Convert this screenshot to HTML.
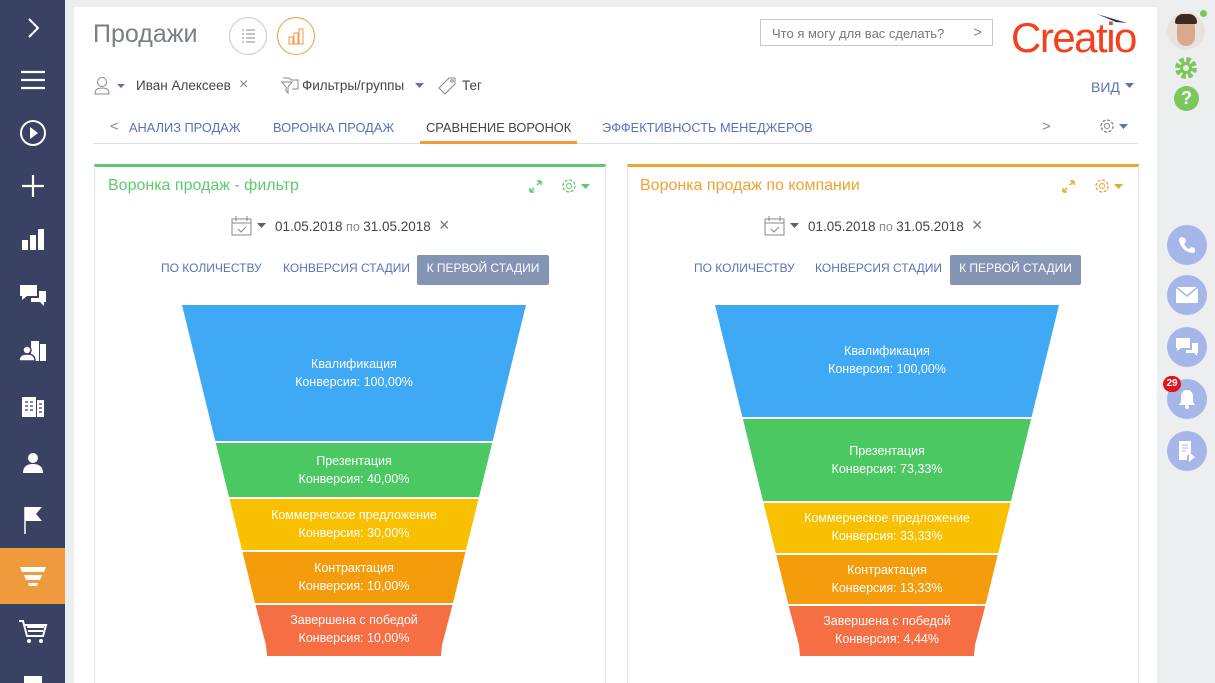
<!DOCTYPE html>
<html style="width:1215px;height:683px;overflow:hidden"><head><meta charset="utf-8"><style>
*{margin:0;padding:0;box-sizing:border-box}
body{width:1215px;height:683px;overflow:hidden;background:#eceef0;font-family:"Liberation Sans","Noto Sans CJK SC",sans-serif;position:relative}
.sb{position:absolute;left:0;top:0;width:65px;height:683px;background:#394263;overflow:hidden}
.sb .i{position:absolute;left:0;width:65px;height:56px;display:flex;align-items:center;justify-content:center}
.card{position:absolute;left:74px;top:7px;width:1083px;height:676px;background:#fff}
.a{position:absolute;white-space:nowrap}
.tab{font-size:12.8px;color:#5a73b8;position:absolute;top:120px}
.panel{position:absolute;top:164px;width:512px;height:519px;background:#fff;border:1px solid #e2e2e2;border-bottom:none}
.rc{position:absolute;left:1167px;width:40px;height:40px;border-radius:50%;background:#a7b6e8;display:flex;align-items:center;justify-content:center}
.btn{position:absolute;font-size:12px;color:#5a73b8}
</style></head><body>
<div class="sb">
 <div class="i" style="top:0"><svg width="20" height="24"><path d="M6 3l9 9-9 9" stroke="#fff" stroke-width="2" fill="none"/></svg></div>
 <div class="i" style="top:52px"><svg width="26" height="20"><path d="M1 2h24M1 10h24M1 18h24" stroke="#fff" stroke-width="2.2"/></svg></div>
 <div class="i" style="top:105px"><svg width="28" height="28"><circle cx="14" cy="14" r="12" stroke="#fff" stroke-width="2" fill="none"/><path d="M11 8l8 6-8 6z" fill="#fff"/></svg></div>
 <div class="i" style="top:158px"><svg width="24" height="24"><path d="M12 1v22M1 12h22" stroke="#fff" stroke-width="2.2"/></svg></div>
 <div class="i" style="top:212px"><svg width="24" height="24"><rect x="1" y="12" width="6" height="10" fill="#fff"/><rect x="9" y="7" width="6" height="15" fill="#fff"/><rect x="17" y="1" width="6" height="21" fill="#fff"/></svg></div>
 <div class="i" style="top:267px"><svg width="28" height="24"><path d="M1 2h17v11H8l-5 4v-4H1z" fill="#fff"/><path d="M20 8h7v11h-2v4l-4-4h-9v-4h8z" fill="#fff"/></svg></div>
 <div class="i" style="top:323px"><svg width="28" height="24"><rect x="12" y="2" width="8" height="20" fill="#fff"/><rect x="21" y="5" width="6" height="17" fill="#fff"/><circle cx="8" cy="11" r="4" fill="#fff" stroke="#394263" stroke-width="1.5"/><path d="M0 22c0-6 4-7 8-7s8 1 8 7z" fill="#fff" stroke="#394263" stroke-width="1.5"/></svg></div>
 <div class="i" style="top:379px"><svg width="26" height="24"><rect x="2" y="2" width="14" height="20" fill="#fff"/><rect x="17" y="5" width="7" height="17" fill="#fff"/><path d="M5 7h3M10 7h3M5 11h3M10 11h3M5 15h3M10 15h3M19 9h3M19 13h3M19 17h3" stroke="#394263" stroke-width="1.3"/></svg></div>
 <div class="i" style="top:435px"><svg width="24" height="24"><circle cx="12" cy="7" r="5" fill="#fff"/><path d="M2 22c0-7 5-9 10-9s10 2 10 9z" fill="#fff"/></svg></div>
 <div class="i" style="top:492px"><svg width="24" height="30"><path d="M4 2v27" stroke="#fff" stroke-width="1.5"/><path d="M4 2h17l-6 7 6 7H4z" fill="#fff"/></svg></div>
 <div class="i" style="top:548px;background:#ef9a3c"><svg width="28" height="24"><path d="M1 3h26l-2 5H3z" fill="#fff"/><path d="M5 11h18l-2 5H7z" fill="#fff"/><path d="M9 19h10l-1 3h-8z" fill="#fff"/></svg></div>
 <div class="i" style="top:604px"><svg width="30" height="26"><path d="M1 2h4l4 15h16l3-11H7" stroke="#fff" stroke-width="2" fill="none"/><path d="M9 8h17M10 12h15" stroke="#fff" stroke-width="2"/><circle cx="11" cy="22" r="2" fill="#fff"/><circle cx="23" cy="22" r="2" fill="#fff"/></svg></div>
 <div class="a" style="left:24px;top:676px;width:18px;height:10px;background:#fff"></div>
</div>

<div class="card"></div>
<div class="a" style="left:93px;top:20px;font-size:25px;color:#7a7e86">Продажи</div>
<div class="a" style="left:229px;top:17px;width:38px;height:38px;border:1px solid #c9c9c9;border-radius:50%"><svg width="38" height="38" style="position:absolute;left:-1px;top:-1px"><path d="M13 14h2M17 14h9M13 18h2M17 18h9M13 22h2M17 22h9M13 26h2M17 26h9" stroke="#888" stroke-width="1" transform="translate(0,-1)"/></svg></div>
<div class="a" style="left:277px;top:17px;width:38px;height:38px;border:1px solid #ef9a3c;border-radius:50%"><svg width="38" height="38" style="position:absolute;left:-1px;top:-1px"><rect x="12" y="20" width="4" height="7" stroke="#ef9a3c" fill="none"/><rect x="17" y="16" width="4" height="11" stroke="#ef9a3c" fill="none"/><rect x="22" y="12" width="4" height="15" stroke="#ef9a3c" fill="none"/></svg></div>
<div class="a" style="left:760px;top:19px;width:233px;height:27px;border:1px solid #c8c8c8;font-size:13px;color:#777;padding:6px 11px">Что я могу для вас сделать?<span style="position:absolute;right:10px;top:4px;font-size:15px;color:#888">&gt;</span></div>
<div class="a" style="left:1011px;top:14px;font-size:42px;color:#f5401c;letter-spacing:-1.5px">Creatio</div>
<svg class="a" style="left:1095px;top:12px" width="35" height="14"><path d="M2 2l30 9-11-1z" fill="#1f2e6b"/></svg>

<svg class="a" style="left:94px;top:76px" width="36" height="20"><circle cx="8" cy="6" r="4.5" stroke="#888" fill="none"/><path d="M1 18c0-5 3-6 7-6s7 1 7 6z" stroke="#888" fill="none"/><path d="M23 8h8l-4 4z" fill="#5a73b8"/></svg>
<div class="a" style="left:136px;top:78px;font-size:13.5px;color:#444">Иван Алексеев</div>
<div class="a" style="left:239px;top:76px;font-size:16px;color:#888">×</div>
<svg class="a" style="left:280px;top:76px" width="20" height="20"><path d="M3 2h6l2 2h7v9h-6M2 6h10l-4 5v6l-2-2v-4z" stroke="#888" fill="none"/></svg>
<div class="a" style="left:302px;top:78px;font-size:13.5px;color:#444">Фильтры/группы</div>
<svg class="a" style="left:414px;top:82px" width="12" height="8"><path d="M1 1h9l-4.5 5z" fill="#5a73b8"/></svg>
<svg class="a" style="left:437px;top:76px" width="20" height="20"><path d="M12 2h6v6l-10 10-6-6z" stroke="#888" fill="none"/><circle cx="15" cy="5" r="1.3" stroke="#888" fill="none"/></svg>
<div class="a" style="left:462px;top:78px;font-size:13.5px;color:#444">Тег</div>
<div class="a" style="left:1091px;top:79px;font-size:14px;color:#5a73b8">ВИД</div>
<svg class="a" style="left:1124px;top:82px" width="12" height="8"><path d="M1 1h9l-4.5 5z" fill="#5a73b8"/></svg>

<div class="a" style="left:110px;top:118px;font-size:15px;color:#888">&lt;</div>
<div class="tab" style="left:129px">АНАЛИЗ ПРОДАЖ</div>
<div class="tab" style="left:273px">ВОРОНКА ПРОДАЖ</div>
<div class="tab" style="left:426px;color:#444">СРАВНЕНИЕ ВОРОНОК</div>
<div class="tab" style="left:602px">ЭФФЕКТИВНОСТЬ МЕНЕДЖЕРОВ</div>
<div class="a" style="left:1042px;top:118px;font-size:15px;color:#888">&gt;</div>
<svg class="a" style="left:1098px;top:117px" width="32" height="20"><circle cx="9" cy="9" r="6" stroke="#888" stroke-width="1.3" fill="none" stroke-dasharray="3 1.7"/><circle cx="9" cy="9" r="2.5" stroke="#888" fill="none"/><path d="M21 7h9l-4.5 5z" fill="#5a73b8"/></svg>
<div class="a" style="left:93px;top:143px;width:1045px;height:1px;background:#e0e0e0"></div>
<div class="a" style="left:420px;top:141px;width:157px;height:3px;background:#ef9a3c"></div>

<div class="panel" style="left:94px;border-top:3px solid #5ccb6d"></div>
<div class="panel" style="left:627px;border-top:3px solid #f0a330"></div>
<div class="a" style="left:108px;top:177px;font-size:16px;color:#5ccb6d">Воронка продаж - фильтр</div>
<div class="a" style="left:640px;top:177px;font-size:16px;color:#f0a330">Воронка продаж по компании</div>
<svg class="a" style="left:527px;top:178px" width="70" height="18"><path d="M3 14l4-4M3 14v-4M3 14h4M14 3l-4 4M14 3v4M14 3h-4" stroke="#5ccb6d" stroke-width="1.5"/><circle cx="42" cy="8" r="6" stroke="#5ccb6d" stroke-width="1.3" fill="none" stroke-dasharray="3 1.7"/><circle cx="42" cy="8" r="2.5" stroke="#5ccb6d" fill="none"/><path d="M54 6h9l-4.5 5z" fill="#5ccb6d"/></svg>
<svg class="a" style="left:1060px;top:178px" width="70" height="18"><path d="M3 14l4-4M3 14v-4M3 14h4M14 3l-4 4M14 3v4M14 3h-4" stroke="#f0a330" stroke-width="1.5"/><circle cx="42" cy="8" r="6" stroke="#f0a330" stroke-width="1.3" fill="none" stroke-dasharray="3 1.7"/><circle cx="42" cy="8" r="2.5" stroke="#f0a330" fill="none"/><path d="M54 6h9l-4.5 5z" fill="#f0a330"/></svg>

<svg class="a" style="left:231px;top:214px" width="40" height="24"><rect x="1" y="5" width="19" height="16" stroke="#888" fill="none"/><path d="M1 9h19M5 2v5M16 2v5M7 15l3 3 5-5" stroke="#888" fill="none"/><path d="M26 9h9l-4.5 5z" fill="#5a6170"/></svg>
<div class="a" style="left:275px;top:219px;font-size:13.5px;color:#444">01.05.2018<span style="color:#888;font-size:12.5px"> по </span> 31.05.2018</div>
<div class="a" style="left:439px;top:215px;font-size:18px;color:#777">×</div>
<svg class="a" style="left:764px;top:214px" width="40" height="24"><rect x="1" y="5" width="19" height="16" stroke="#888" fill="none"/><path d="M1 9h19M5 2v5M16 2v5M7 15l3 3 5-5" stroke="#888" fill="none"/><path d="M26 9h9l-4.5 5z" fill="#5a6170"/></svg>
<div class="a" style="left:808px;top:219px;font-size:13.5px;color:#444">01.05.2018<span style="color:#888;font-size:12.5px"> по </span> 31.05.2018</div>
<div class="a" style="left:972px;top:215px;font-size:18px;color:#777">×</div>

<div class="btn" style="left:161px;top:261px">ПО КОЛИЧЕСТВУ</div>
<div class="btn" style="left:283px;top:261px">КОНВЕРСИЯ СТАДИИ</div>
<div class="a" style="left:417px;top:255px;width:132px;height:30px;background:#8394b5;border-radius:2px;color:#fff;font-size:12px;text-align:center;line-height:26px">К ПЕРВОЙ СТАДИИ</div>
<div class="btn" style="left:694px;top:261px">ПО КОЛИЧЕСТВУ</div>
<div class="btn" style="left:815px;top:261px">КОНВЕРСИЯ СТАДИИ</div>
<div class="a" style="left:950px;top:255px;width:131px;height:30px;background:#8394b5;border-radius:2px;color:#fff;font-size:12px;text-align:center;line-height:26px">К ПЕРВОЙ СТАДИИ</div>

<svg class="a" style="left:0;top:0" width="1215" height="683" font-family="Liberation Sans, sans-serif" font-size="12.5" fill="#fff" text-anchor="middle">
<polygon points="182,305 526,305 492.7,441 215.3,441" fill="#3fa9f5"/>
<polygon points="215.8,443 492.2,443 479,497 229,497" fill="#4bc862"/>
<polygon points="229.5,499 478.5,499 466,550 242,550" fill="#f8c000"/>
<polygon points="242.5,552 465.5,552 453,603 255,603" fill="#f59c0c"/>
<polygon points="255.5,605 452.5,605 442,645 441,656 267,656 266,645" fill="#f66e44"/>
<text x="354" y="368">Квалификация</text><text x="354" y="386">Конверсия: 100,00%</text>
<text x="354" y="465">Презентация</text><text x="354" y="483">Конверсия: 40,00%</text>
<text x="354" y="519">Коммерческое предложение</text><text x="354" y="537">Конверсия: 30,00%</text>
<text x="354" y="572">Контрактация</text><text x="354" y="590">Конверсия: 10,00%</text>
<text x="354" y="624">Завершена с победой</text><text x="354" y="642">Конверсия: 10,00%</text>
<polygon points="715,305 1059,305 1031.6,417 742.4,417" fill="#3fa9f5"/>
<polygon points="742.9,419 1031.1,419 1011,501 763,501" fill="#4bc862"/>
<polygon points="763.5,503 1010.5,503 998.2,553 775.8,553" fill="#f8c000"/>
<polygon points="776.3,555 997.7,555 985.7,604 788.3,604" fill="#f59c0c"/>
<polygon points="788.7,606 985.3,606 975,645 974,656 800,656 799,645" fill="#f66e44"/>
<text x="887" y="355">Квалификация</text><text x="887" y="373">Конверсия: 100,00%</text>
<text x="887" y="455">Презентация</text><text x="887" y="473">Конверсия: 73,33%</text>
<text x="887" y="522">Коммерческое предложение</text><text x="887" y="540">Конверсия: 33,33%</text>
<text x="887" y="574">Контрактация</text><text x="887" y="592">Конверсия: 13,33%</text>
<text x="887" y="625">Завершена с победой</text><text x="887" y="643">Конверсия: 4,44%</text>
</svg>

<div class="a" style="left:1167px;top:12px;width:38px;height:38px;border-radius:50%;background:#e8e2dc;overflow:hidden"><div style="position:absolute;left:10px;top:6px;width:18px;height:28px;border-radius:9px;background:#d9a88e"></div><div style="position:absolute;left:8px;top:2px;width:22px;height:10px;border-radius:8px 8px 2px 2px;background:#3b2a22"></div></div>
<div class="a" style="left:1200px;top:10px;width:7px;height:7px;border-radius:50%;background:#7cc75b"></div>
<svg class="a" style="left:1173px;top:55px" width="26" height="26"><circle cx="13" cy="13" r="8" fill="none" stroke="#7cc75b" stroke-width="6" stroke-dasharray="4 2.3"/><circle cx="13" cy="13" r="6" fill="#7cc75b"/><circle cx="13" cy="13" r="3" fill="#eceef0"/></svg>
<div class="a" style="left:1174px;top:86px;width:25px;height:25px;border-radius:50%;background:#7cc75b;color:#fff;font-weight:bold;font-size:18px;text-align:center;line-height:25px">?</div>

<div class="rc" style="top:225px"><svg width="20" height="20"><path d="M4 2l4 1 1 4-2 2c1 2 3 4 5 5l2-2 4 1 0 4-2 1C9 18 2 11 2 4z" fill="#fff"/></svg></div>
<div class="rc" style="top:275px"><svg width="22" height="16"><rect x="0" y="0" width="22" height="16" fill="#fff"/><path d="M0 0l11 9 11-9" stroke="#a7b6e8" stroke-width="1.5" fill="none"/></svg></div>
<div class="rc" style="top:327px"><svg width="24" height="20"><path d="M1 1h14v10H6l-4 3v-3H1z" fill="#fff"/><path d="M17 6h6v10h-1v3l-3-3h-8v-3h6z" fill="#fff"/></svg></div>
<div class="rc" style="top:379px"><svg width="20" height="22"><path d="M10 2c-4 0-6 3-6 7v5l-2 3h16l-2-3V9c0-4-2-7-6-7z" fill="#fff"/><circle cx="10" cy="19" r="2" fill="#fff"/></svg></div>
<div class="a" style="left:1163px;top:376px;width:18px;height:16px;border-radius:8px;background:#e0141e;color:#fff;font-size:10px;font-weight:bold;text-align:center;line-height:16px">29</div>
<div class="rc" style="top:431px"><svg width="20" height="22"><path d="M2 1h12v11l-4 4v4H2z" fill="#fff"/><path d="M5 5h6M5 8h6M5 11h4" stroke="#a7b6e8"/><path d="M12 12l6 5-6 5z" fill="#fff"/></svg></div>
</body></html>
